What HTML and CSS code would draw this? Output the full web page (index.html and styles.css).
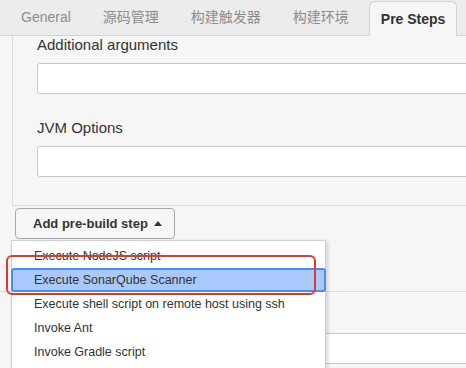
FILE: index.html
```html
<!DOCTYPE html>
<html lang="zh">
<head>
  <meta charset="UTF-8" />
  <title>Pre Steps</title>
  <link rel="stylesheet" href="styles.css">
</head>
<body>
  <!-- Onglets -->
  <div class="tabs">
    <div class="tab">General</div>
    <div class="tab">源码管理</div>
    <div class="tab">构建触发器</div>
    <div class="tab">构建环境</div>
    <div class="tab active">Pre Steps</div>
  </div>

  <div class="section">
    <label class="field-label">Additional arguments</label>
    <input class="field-input" type="text" />
    <label class="field-label second">JVM Options</label>
    <input class="field-input" type="text" />
  </div>

  <div class="step-bar">
    <button class="add-step">Add pre-build step
      <svg class="caret" width="8" height="5" viewBox="0 0 8 5"><path d="M0 5 L4 0 L8 5 Z" fill="#333"/></svg>
    </button>
  </div>

  <div class="next-block">
    <input class="field-input" type="text" />
  </div>

  <!-- Menu déroulant -->
  <ul class="menu">
    <li>Execute NodeJS script</li>
    <li class="selected">Execute SonarQube Scanner</li>
    <li>Execute shell script on remote host using ssh</li>
    <li>Invoke Ant</li>
    <li>Invoke Gradle script</li>
  </ul>

  <div class="highlight-box"></div>
</body>
</html>
```

FILE: styles.css
```css
body {
  font-family: "Liberation Sans", Arial, "Noto Sans CJK SC", sans-serif;
  margin: 0;
  background: #f6f6f6;
  color: #333;
  overflow: hidden;
}
.tabs {
  display: flex;
  gap: 8px;
  height: 35px;
  padding-left: 9px;
  background: #ececec;
  border-bottom: 1px solid #d2d2d2;
}
.tab {
  padding: 0 12px;
  font-size: 14px;
  line-height: 35px;
  color: #8c8c8c;
}
.tab.active {
  margin-top: 1px;
  line-height: 34px;
  margin-bottom: -1px;
  background: #f6f6f6;
  border: 1px solid #d2d2d2;
  border-bottom: none;
  border-radius: 6px 6px 0 0;
  color: #333;
  font-weight: bold;
  padding: 0 11px;
}
.section {
  margin-left: 12px;
  margin-right: -20px;
  padding: 0 0 28px 24px;
  border-left: 1px solid #dcdcdc;
  border-bottom: 1px solid #dcdcdc;
  display: flex;
  flex-direction: column;
}
.field-label {
  font-size: 15px;
  line-height: 18px;
  margin-bottom: 9px;
}
.field-label.second {
  margin-top: 25px;
}
.field-input {
  box-sizing: border-box;
  height: 31px;
  width: 100%;
  background: #fff;
  border: 1px solid #c8c8c8;
  border-radius: 3px;
}
.step-bar {
  padding: 2px 0 0 15px;
}
.add-step {
  box-sizing: border-box;
  width: 160px;
  height: 31px;
  padding: 0 0 0 17px;
  display: flex;
  align-items: center;
  gap: 6px;
  background: #f6f6f6;
  border: 1px solid #a8a8a8;
  border-radius: 4px;
  font-family: inherit;
  font-size: 13px;
  font-weight: bold;
  color: #333;
}
.caret {
  margin-top: -1px;
}
.next-block {
  margin-top: 52px;
  margin-right: -20px;
  padding: 41px 0 0 37px;
  border-top: 1px solid #dcdcdc;
}
.menu {
  position: absolute;
  left: 11px;
  top: 240px;
  width: 315px;
  height: 140px;
  box-sizing: border-box;
  margin: 0;
  padding: 3px 0 0;
  list-style: none;
  background: #fff;
  border: 1px solid #cfcfcf;
  box-shadow: 2px 1px 4px rgba(0, 0, 0, 0.15);
}
.menu li {
  height: 24px;
  line-height: 24px;
  padding-left: 22px;
  font-size: 12.5px;
  color: #333;
}
.menu li.selected {
  margin: 0 -1px;
  padding-left: 21px;
  background: #a9c9fa;
  border: 2px solid #4a8cf2;
  border-radius: 3px;
  height: 20px;
  line-height: 20px;
}
.highlight-box {
  position: absolute;
  left: 6px;
  top: 255px;
  width: 310px;
  height: 40px;
  box-sizing: border-box;
  border: 2.5px solid #d83c2c;
  border-radius: 6px;
}
```
